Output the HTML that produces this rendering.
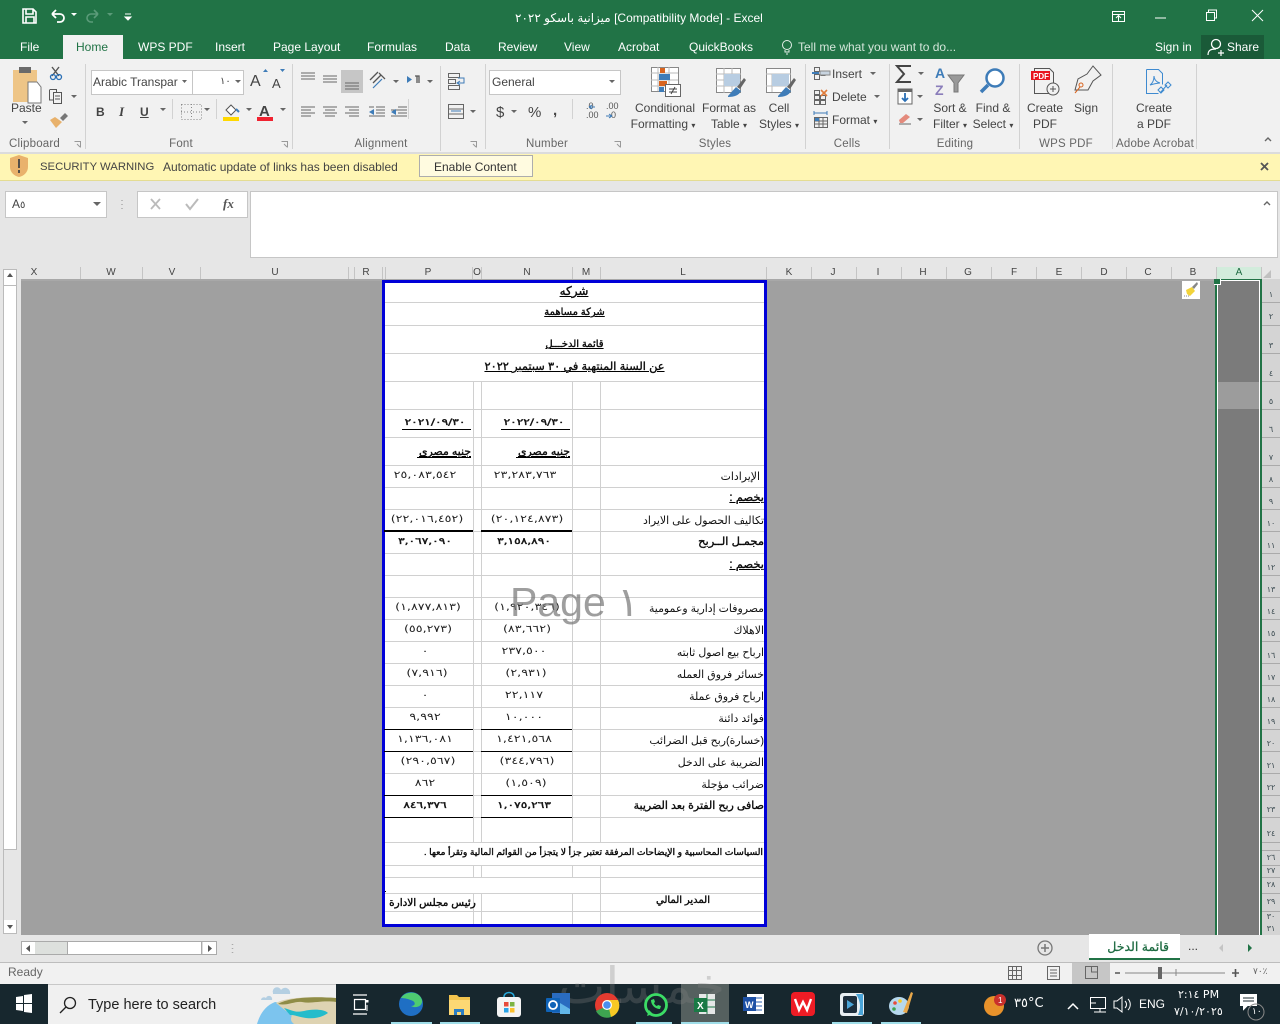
<!DOCTYPE html>
<html lang="en"><head><meta charset="utf-8"><title>Excel</title>
<style>
html,body{margin:0;padding:0;width:1280px;height:1024px;overflow:hidden;background:#e6e6e6;font-family:"Liberation Sans","DejaVu Sans",sans-serif}
.b{position:absolute}
.t{position:absolute;white-space:nowrap;line-height:16px;font-size:12px;color:#444}
.c{transform:translateX(-50%)}
.tab{color:#fff;top:39px}
.g{color:#666;top:136px;font-size:11.5px;letter-spacing:.2px}
.h{position:absolute;top:267px;height:12px;line-height:12px;font-size:10px;color:#444;transform:translateX(-50%)}
.s{position:absolute;top:267px;width:1px;height:12px;background:#c4c4c4}
.r{position:absolute;left:1262px;width:18px;text-align:center;font:8px "DejaVu Sans",sans-serif;color:#3a4a50;height:10px;line-height:10px}
.rl{position:absolute;left:1262px;width:18px;height:1px;background:#aaa}
.hl{position:absolute;left:385px;width:379px;height:1px;background:#d0d0d0}
.vl{position:absolute;width:1px;background:#d0d0d0}
.k{position:absolute;background:#000;height:1px}
.a{position:absolute;white-space:nowrap;font:10.9px/14px "Liberation Sans","DejaVu Sans",sans-serif;color:#111;direction:rtl}
.ab{-webkit-text-stroke:.35px #000}
.u{text-decoration:underline}
.n{position:absolute;white-space:nowrap;font:10px/14px "DejaVu Sans",sans-serif;color:#222;text-align:center;transform:translateX(-50%) scaleX(1.27)}
.nb{font-size:9px;-webkit-text-stroke:.35px #000;transform:translateX(-50%) scaleX(1.36)}
.cr{font-size:8px}
</style></head><body>

<div class="b" style="left:0;top:0;width:1280px;height:59px;background:#217346"></div>
<div class="b" style="left:63px;top:35px;width:60px;height:24px;background:#f1f1f1"></div>
<div class="b" style="left:1201px;top:35px;width:63px;height:24px;background:#1a5a38"></div>
<div class="b" style="left:0;top:59px;width:1280px;height:93px;background:#f1f1f1"></div>
<div class="b" style="left:0;top:152px;width:1280px;height:2px;background:#dcdcdc"></div>
<div class="b" style="left:0;top:154px;width:1280px;height:26px;background:#fff6b4;border-bottom:1px solid #e4dc92"></div>
<div class="b" style="left:419px;top:155px;width:112px;height:20px;background:#fffbe0;border:1px solid #adadad"></div>
<div class="b" style="left:0;top:181px;width:1280px;height:86px;background:#e6e6e6"></div>
<div class="b" style="left:5px;top:191px;width:100px;height:25px;background:#fff;border:1px solid #c6c6c6"></div>
<div class="b" style="left:137px;top:191px;width:109px;height:25px;background:#fff;border:1px solid #c6c6c6"></div>
<div class="b" style="left:250px;top:191px;width:1026px;height:65px;background:#fff;border:1px solid #c6c6c6"></div>
<div class="b" style="left:0;top:267px;width:1280px;height:12px;background:#e6e6e6;border-bottom:2px solid #a8a8a8"></div>
<div class="b" style="left:1216px;top:267px;width:45px;height:12px;background:#d2ecdc"></div>

<div class="b" style="left:0;top:281px;width:1280px;height:654px;background:#a0a0a0"></div>
<div class="b" style="left:0;top:268px;width:21px;height:667px;background:#e6e6e6"></div>
<div class="b" style="left:3px;top:269px;width:14px;height:665px;background:#fff;border:1px solid #bbb;box-sizing:border-box"></div>
<div class="b" style="left:3px;top:285px;width:14px;height:565px;background:#fff;border:1px solid #bbb;box-sizing:border-box"></div>
<div class="b" style="left:3px;top:850px;width:14px;height:70px;background:#e6e6e6;border-left:1px solid #bbb;box-sizing:border-box"></div>

<div class="b" style="left:1215px;top:279px;width:47px;height:656px;background:#217346"></div>
<div class="b" style="left:1217px;top:280px;width:43px;height:655px;background:#fff"></div>
<div class="b" style="left:1218px;top:281px;width:41px;height:654px;background:#7b7b7b"></div>
<div class="b" style="left:1218px;top:382px;width:41px;height:27px;background:#9c9c9c"></div>
<div class="b" style="left:1262px;top:279px;width:18px;height:656px;background:#d4d4d4"></div>
<div class="b" style="left:1214px;top:279px;width:6px;height:5px;background:#217346;border-right:1px solid #fff;border-bottom:1px solid #fff"></div>

<div class="b" style="left:382px;top:280px;width:379px;height:641px;background:#fff;border:3px solid #0000d8"></div>

<div class="hl" style="top:302px"></div><div class="hl" style="top:325px"></div><div class="hl" style="top:353px"></div><div class="hl" style="top:381px"></div><div class="hl" style="top:409px"></div><div class="hl" style="top:437px"></div><div class="hl" style="top:465px"></div><div class="hl" style="top:487px"></div><div class="hl" style="top:509px"></div><div class="hl" style="top:531px"></div><div class="hl" style="top:553px"></div><div class="hl" style="top:575px"></div><div class="hl" style="top:597px"></div><div class="hl" style="top:619px"></div><div class="hl" style="top:641px"></div><div class="hl" style="top:663px"></div><div class="hl" style="top:685px"></div><div class="hl" style="top:707px"></div><div class="hl" style="top:729px"></div><div class="hl" style="top:751px"></div><div class="hl" style="top:773px"></div><div class="hl" style="top:795px"></div><div class="hl" style="top:817px"></div><div class="hl" style="top:842px"></div><div class="hl" style="top:865px"></div><div class="hl" style="top:877px"></div><div class="hl" style="top:893px"></div><div class="hl" style="top:911px"></div>
<div class="vl" style="left:473px;top:381px;height:461px"></div><div class="vl" style="left:481px;top:381px;height:461px"></div><div class="vl" style="left:572px;top:381px;height:461px"></div><div class="vl" style="left:600px;top:381px;height:461px"></div>
<div class="vl" style="left:473px;top:865px;height:12px"></div><div class="vl" style="left:481px;top:865px;height:12px"></div><div class="vl" style="left:572px;top:865px;height:12px"></div><div class="vl" style="left:600px;top:865px;height:59px"></div>
<div class="vl" style="left:473px;top:893px;height:31px"></div><div class="vl" style="left:481px;top:893px;height:31px"></div><div class="vl" style="left:572px;top:893px;height:31px"></div>
<div class="b" style="left:385px;top:891px;width:1px;height:1px;background:#000"></div>

<div class="k" style="left:402px;top:429px;width:69px"></div><div class="k" style="left:501px;top:429px;width:69px"></div>
<div class="k" style="left:417px;top:457px;width:54px"></div><div class="k" style="left:516px;top:457px;width:54px"></div>
<div class="k" style="left:384px;top:530px;width:89px;height:2px"></div><div class="k" style="left:481px;top:530px;width:91px;height:2px"></div>
<div class="k" style="left:384px;top:729px;width:89px"></div><div class="k" style="left:481px;top:729px;width:91px"></div>
<div class="k" style="left:384px;top:751px;width:89px"></div><div class="k" style="left:481px;top:751px;width:91px"></div>
<div class="k" style="left:384px;top:795px;width:89px"></div><div class="k" style="left:481px;top:795px;width:91px"></div>
<div class="k" style="left:384px;top:817px;width:89px"></div><div class="k" style="left:481px;top:817px;width:91px"></div>

<div class="a ab u" style="left:544px;top:284px;font-size:12px;width:60px;text-align:center">شركه</div>
<div class="a ab u" style="left:524px;top:306px;width:101px;text-align:center;font-size:10px">شركة مساهمة</div>
<div class="a ab u" style="left:524px;top:338px;width:101px;text-align:center;font-size:10px">قائمة الدخـــل</div>
<div class="a ab u" style="left:464px;top:360px;width:221px;text-align:center;font-size:11.400px">عن السنة المنتهية في ٣٠ سبتمبر ٢٠٢٢</div>

<div class="n nb" style="left:435px;top:416px">٢٠٢١/٠٩/٣٠</div>
<div class="n nb" style="left:534px;top:416px">٢٠٢٢/٠٩/٣٠</div>
<div class="a ab u" style="left:411px;top:445px;width:60px">جنيه مصري</div>
<div class="a ab u" style="left:510px;top:445px;width:60px">جنيه مصري</div>

<div class="a" style="left:680px;top:470px;width:80px">الإيرادات</div>
<div class="a ab u" style="left:680px;top:491px;width:84px;font-size:11.500px">يخصم :</div>
<div class="a" style="left:600px;top:514px;width:164px">تكاليف الحصول على الايراد</div>
<div class="a ab" style="left:640px;top:535px;width:124px;font-size:11.500px">مجمـل الــربح</div>
<div class="a ab u" style="left:680px;top:558px;width:84px;font-size:11.500px">يخصم :</div>
<div class="a" style="left:600px;top:602px;width:164px">مصروفات إدارية وعمومية</div>
<div class="a" style="left:680px;top:624px;width:84px">الاهلاك</div>
<div class="a" style="left:600px;top:646px;width:164px">ارباح بيع اصول ثابته</div>
<div class="a" style="left:600px;top:668px;width:164px">خسائر فروق العمله</div>
<div class="a" style="left:600px;top:690px;width:164px">ارباح  فروق عملة</div>
<div class="a" style="left:680px;top:712px;width:84px">فوائد دائنة</div>
<div class="a" style="left:600px;top:734px;width:164px">(خسارة)ربح قبل الضرائب</div>
<div class="a" style="left:600px;top:756px;width:164px">الضريبة على الدخل</div>
<div class="a" style="left:680px;top:778px;width:84px">ضرائب مؤجلة</div>
<div class="a ab" style="left:600px;top:799px;width:164px;font-size:11px">صافى ربح الفترة بعد الضريبة</div>
<div class="a ab" style="left:385px;top:845px;width:378px;font-size:9.200px">السياسات المحاسبية و الإيضاحات المرفقة  تعتبر جزأ لا يتجزأ من القوائم المالية وتقرأ معها .</div>
<div class="a ab" style="left:625px;top:894px;width:116px;text-align:center;font-size:10px">المدير  المالي</div>
<div class="a ab" style="left:387px;top:896px;width:91px;text-align:center;font-size:10.500px">رئيس مجلس الادارة</div>

<div class="n" style="left:425px;top:469px">٢٥,٠٨٣,٥٤٢</div><div class="n" style="left:525px;top:469px">٢٣,٢٨٣,٧٦٣</div>
<div class="n" style="left:427px;top:513px">(٢٢,٠١٦,٤٥٢)</div><div class="n" style="left:527px;top:513px">(٢٠,١٢٤,٨٧٣)</div>
<div class="n nb" style="left:425px;top:535px">٣,٠٦٧,٠٩٠</div><div class="n nb" style="left:524px;top:535px">٣,١٥٨,٨٩٠</div>
<div class="n" style="left:428px;top:601px">(١,٨٧٧,٨١٣)</div><div class="n" style="left:527px;top:601px">(١,٩٢٠,٣٤٦)</div>
<div class="n" style="left:428px;top:623px">(٥٥,٢٧٣)</div><div class="n" style="left:527px;top:623px">(٨٣,٦٦٢)</div>
<div class="n" style="left:425px;top:645px">٠</div><div class="n" style="left:524px;top:645px">٢٣٧,٥٠٠</div>
<div class="n" style="left:427px;top:667px">(٧,٩١٦)</div><div class="n" style="left:526px;top:667px">(٢,٩٣١)</div>
<div class="n" style="left:425px;top:689px">٠</div><div class="n" style="left:524px;top:689px">٢٢,١١٧</div>
<div class="n" style="left:425px;top:711px">٩,٩٩٢</div><div class="n" style="left:524px;top:711px">١٠,٠٠٠</div>
<div class="n" style="left:425px;top:733px">١,١٣٦,٠٨١</div><div class="n" style="left:524px;top:733px">١,٤٢١,٥٦٨</div>
<div class="n" style="left:428px;top:755px">(٢٩٠,٥٦٧)</div><div class="n" style="left:527px;top:755px">(٣٤٤,٧٩٦)</div>
<div class="n" style="left:425px;top:777px">٨٦٢</div><div class="n" style="left:526px;top:777px">(١,٥٠٩)</div>
<div class="n nb" style="left:425px;top:799px">٨٤٦,٣٧٦</div><div class="n nb" style="left:524px;top:799px">١,٠٧٥,٢٦٣</div>

<div class="b" style="left:510px;top:577px;font:41px/50px 'Liberation Sans','DejaVu Sans',sans-serif;color:rgba(120,120,120,.72);white-space:nowrap">Page ١</div>

<!-- column headers -->
<div class="s" style="left:80px"></div><div class="s" style="left:142px"></div><div class="s" style="left:200px"></div><div class="s" style="left:348px"></div><div class="s" style="left:354px"></div><div class="s" style="left:382px"></div><div class="s" style="left:385px"></div><div class="s" style="left:472px"></div><div class="s" style="left:481px"></div><div class="s" style="left:572px"></div><div class="s" style="left:600px"></div><div class="s" style="left:766px"></div><div class="s" style="left:811px"></div><div class="s" style="left:856px"></div><div class="s" style="left:901px"></div><div class="s" style="left:946px"></div><div class="s" style="left:991px"></div><div class="s" style="left:1036px"></div><div class="s" style="left:1081px"></div><div class="s" style="left:1126px"></div><div class="s" style="left:1171px"></div><div class="s" style="left:1216px"></div><div class="s" style="left:1261px"></div>
<div class="h" style="left:34px">X</div><div class="h" style="left:111px">W</div><div class="h" style="left:172px">V</div><div class="h" style="left:275px">U</div><div class="h" style="left:366px">R</div><div class="h" style="left:428px">P</div><div class="h" style="left:477px">O</div><div class="h" style="left:527px">N</div><div class="h" style="left:586px">M</div><div class="h" style="left:683px">L</div><div class="h" style="left:789px">K</div><div class="h" style="left:833px">J</div><div class="h" style="left:878px">I</div><div class="h" style="left:923px">H</div><div class="h" style="left:968px">G</div><div class="h" style="left:1014px">F</div><div class="h" style="left:1059px">E</div><div class="h" style="left:1104px">D</div><div class="h" style="left:1148px">C</div><div class="h" style="left:1193px">B</div><div class="h" style="left:1239px;color:#1c6a40">A</div>

<!-- row headers -->
<div class="rl" style="top:302px"></div><div class="rl" style="top:325px"></div><div class="rl" style="top:353px"></div><div class="rl" style="top:381px"></div><div class="rl" style="top:409px"></div><div class="rl" style="top:437px"></div><div class="rl" style="top:465px"></div><div class="rl" style="top:487px"></div><div class="rl" style="top:509px"></div><div class="rl" style="top:531px"></div><div class="rl" style="top:553px"></div><div class="rl" style="top:575px"></div><div class="rl" style="top:597px"></div><div class="rl" style="top:619px"></div><div class="rl" style="top:641px"></div><div class="rl" style="top:663px"></div><div class="rl" style="top:685px"></div><div class="rl" style="top:707px"></div><div class="rl" style="top:729px"></div><div class="rl" style="top:751px"></div><div class="rl" style="top:773px"></div><div class="rl" style="top:795px"></div><div class="rl" style="top:817px"></div><div class="rl" style="top:842px"></div><div class="rl" style="top:850px"></div><div class="rl" style="top:865px"></div><div class="rl" style="top:877px"></div><div class="rl" style="top:893px"></div><div class="rl" style="top:911px"></div>
<div class="r" style="top:290px">١</div><div class="r" style="top:312px">٢</div><div class="r" style="top:341px">٣</div><div class="r" style="top:369px">٤</div><div class="r" style="top:397px">٥</div><div class="r" style="top:425px">٦</div><div class="r" style="top:453px">٧</div><div class="r" style="top:475px">٨</div><div class="r" style="top:497px">٩</div><div class="r" style="top:519px">١٠</div><div class="r" style="top:541px">١١</div><div class="r" style="top:563px">١٢</div><div class="r" style="top:585px">١٣</div><div class="r" style="top:607px">١٤</div><div class="r" style="top:629px">١٥</div><div class="r" style="top:651px">١٦</div><div class="r" style="top:673px">١٧</div><div class="r" style="top:695px">١٨</div><div class="r" style="top:717px">١٩</div><div class="r" style="top:739px">٢٠</div><div class="r" style="top:761px">٢١</div><div class="r" style="top:783px">٢٢</div><div class="r" style="top:805px">٢٣</div><div class="r" style="top:829px">٢٤</div><div class="r" style="top:853px">٢٦</div><div class="r" style="top:866px">٢٧</div><div class="r" style="top:880px">٢٨</div><div class="r" style="top:897px">٢٩</div><div class="r" style="top:912px">٣٠</div><div class="r" style="top:924px">٣١</div>

<!-- bottom bars -->
<div class="b" style="left:0;top:935px;width:1280px;height:27px;background:#e6e6e6;border-bottom:1px solid #bdbdbd"></div>
<div class="b" style="left:0;top:963px;width:1280px;height:21px;background:#f1f1f1"></div>
<div class="b" style="left:21px;top:941px;width:196px;height:14px;background:#dcdcdc;border:1px solid #aaa;box-sizing:border-box"></div>
<div class="b" style="left:67px;top:941px;width:135px;height:14px;background:#fff;border:1px solid #aaa;box-sizing:border-box"></div>
<div class="b" style="left:35px;top:942px;width:32px;height:12px;background:#dde0dd"></div>
<div class="b" style="left:22px;top:942px;width:13px;height:12px;background:#fff"></div>
<div class="b" style="left:203px;top:942px;width:13px;height:12px;background:#fff"></div>
<div class="b" style="left:1089px;top:934px;width:91px;height:24px;background:#fff;border-bottom:2px solid #217346"></div>
<div class="b" style="left:1072px;top:963px;width:38px;height:21px;background:#c6c6c6"></div>
<div class="b" style="left:0;top:984px;width:1280px;height:40px;background:#17272e"></div>
<div class="b" style="left:48px;top:984px;width:288px;height:40px;background:#f0f0f0;border-top:1px solid #c8c8c8;box-sizing:border-box"></div>
<div class="b" style="left:681px;top:984px;width:48px;height:40px;background:#55605f"></div>
<div class="b" style="left:555px;top:952px;font:50px/60px 'Noto Sans CJK SC','DejaVu Sans',sans-serif;color:rgba(130,130,130,.3);white-space:nowrap;direction:rtl;width:170px">خمسات</div>
<div class="b" style="left:391px;top:1022px;width:41px;height:2px;background:#9fdde8"></div>
<div class="b" style="left:440px;top:1022px;width:40px;height:2px;background:#9fdde8"></div>
<div class="b" style="left:636px;top:1022px;width:36px;height:2px;background:#9fdde8"></div>
<div class="b" style="left:681px;top:1022px;width:48px;height:2px;background:#9fdde8"></div>
<div class="b" style="left:832px;top:1022px;width:40px;height:2px;background:#9fdde8"></div>
<div class="b" style="left:881px;top:1022px;width:40px;height:2px;background:#9fdde8"></div>

<!-- title bar & tabs -->
<div class="t" style="left:515px;top:10px;color:#fff;direction:ltr;width:260px"><span dir="rtl">ميزانية باسكو ٢٠٢٢</span> [Compatibility Mode] - Excel</div>
<div class="t tab" style="left:20px">File</div>
<div class="t tab" style="left:76px;color:#217346">Home</div>
<div class="t tab" style="left:138px">WPS PDF</div>
<div class="t tab" style="left:215px">Insert</div>
<div class="t tab" style="left:273px">Page Layout</div>
<div class="t tab" style="left:367px">Formulas</div>
<div class="t tab" style="left:445px">Data</div>
<div class="t tab" style="left:498px">Review</div>
<div class="t tab" style="left:564px">View</div>
<div class="t tab" style="left:618px">Acrobat</div>
<div class="t tab" style="left:689px">QuickBooks</div>
<div class="t tab" style="left:798px;color:#d4e6da">Tell me what you want to do...</div>
<div class="t tab" style="left:1155px">Sign in</div>
<div class="t tab" style="left:1227px">Share</div>

<!-- ribbon text -->
<div class="t" style="left:11px;top:100px">Paste</div>
<div class="b" style="left:91px;top:70px;width:100px;height:23px;background:#fff;border:1px solid #c6c6c6"></div>
<div class="b" style="left:192px;top:70px;width:50px;height:23px;background:#fff;border:1px solid #c6c6c6"></div>
<div class="b" style="left:489px;top:70px;width:130px;height:23px;background:#fff;border:1px solid #c6c6c6"></div>
<div class="t" style="left:93px;top:74px;width:85px;overflow:hidden">Arabic Transparent</div>
<div class="t" style="left:220px;top:74px;font-family:'DejaVu Sans';font-size:10px">١٠</div>
<div class="t" style="left:492px;top:74px">General</div>
<div class="t" style="left:96px;top:104px;font-weight:bold">B</div>
<div class="t" style="left:119px;top:104px;font-style:italic;font-family:'Liberation Serif';font-size:13px;font-weight:bold">I</div>
<div class="t" style="left:140px;top:104px;font-weight:bold;text-decoration:underline">U</div>
<div class="t" style="left:250px;top:74px;font-size:16px">A</div>
<div class="t" style="left:272px;top:76px;font-size:13px">A</div>
<div class="t" style="left:259px;top:104px;font-size:15px;font-weight:bold;color:#444">A</div>
<div class="t" style="left:496px;top:105px;font-size:15px">$</div>
<div class="t" style="left:528px;top:105px;font-size:15px">%</div>
<div class="t" style="left:553px;top:103px;font-size:15px;font-weight:bold">,</div>
<div class="t" style="left:586px;top:102px;font-size:9px;line-height:9px;color:#555">.0<br>.00</div>
<div class="t" style="left:606px;top:102px;font-size:9px;line-height:9px;color:#555">.00<br>&nbsp;.0</div>

<div class="t c" style="left:665px;top:100px">Conditional</div>
<div class="t c" style="left:663px;top:116px">Formatting <span class="cr">▾</span></div>
<div class="t c" style="left:729px;top:100px">Format as</div>
<div class="t c" style="left:729px;top:116px">Table <span class="cr">▾</span></div>
<div class="t c" style="left:779px;top:100px">Cell</div>
<div class="t c" style="left:779px;top:116px">Styles <span class="cr">▾</span></div>
<div class="t" style="left:832px;top:66px">Insert</div>
<div class="t" style="left:832px;top:89px">Delete</div>
<div class="t" style="left:832px;top:112px">Format <span class="cr">▾</span></div>
<div class="t c" style="left:950px;top:100px">Sort &amp;</div>
<div class="t c" style="left:950px;top:116px">Filter <span class="cr">▾</span></div>
<div class="t c" style="left:993px;top:100px">Find &amp;</div>
<div class="t c" style="left:993px;top:116px">Select <span class="cr">▾</span></div>
<div class="t c" style="left:1045px;top:100px">Create</div>
<div class="t c" style="left:1045px;top:116px">PDF</div>
<div class="t c" style="left:1086px;top:100px">Sign</div>
<div class="t c" style="left:1154px;top:100px">Create</div>
<div class="t c" style="left:1154px;top:116px">a PDF</div>

<div class="t g" style="left:9px">Clipboard</div>
<div class="t g c" style="left:181px">Font</div>
<div class="t g c" style="left:381px">Alignment</div>
<div class="t g c" style="left:547px">Number</div>
<div class="t g c" style="left:715px">Styles</div>
<div class="t g c" style="left:847px">Cells</div>
<div class="t g c" style="left:955px">Editing</div>
<div class="t g c" style="left:1066px">WPS PDF</div>
<div class="t g c" style="left:1155px">Adobe Acrobat</div>

<div class="t" style="left:40px;top:159px;color:#444;font-size:11.300px">SECURITY WARNING</div>
<div class="t" style="left:163px;top:159px;color:#444">Automatic update of links has been disabled</div>
<div class="t" style="left:434px;top:159px;color:#333">Enable Content</div>
<div class="t" style="left:12px;top:196px;color:#444">A<span style="font:10px 'DejaVu Sans'">٥</span></div>
<div class="t" style="left:223px;top:196px;font:italic bold 13px/16px 'Liberation Serif';color:#555">fx</div>

<div class="t" style="left:8px;top:964px;color:#666">Ready</div>
<div class="t" style="left:88px;top:997px;font-size:14.500px;color:#222">Type here to search</div>
<div class="t" style="left:1105px;top:939px;width:64px;font:12.500px/16px 'Liberation Sans','DejaVu Sans',sans-serif;color:#1c6a40;-webkit-text-stroke:.25px #1c6a40;direction:rtl">قائمة الدخل</div>
<div class="t" style="left:1188px;top:938px;color:#333">...</div>
<div class="t" style="left:1253px;top:964px;font:9px/16px 'DejaVu Sans';color:#666">٧٠٪</div>
<div class="t" style="left:1014px;top:996px;font:13px/16px 'DejaVu Sans','Liberation Sans',sans-serif;color:#fff">٣٥°C</div>
<div class="t" style="left:1139px;top:996px;color:#fff;font-size:12px">ENG</div>
<div class="t" style="left:1178px;top:987px;color:#fff;font:11px/16px 'DejaVu Sans',sans-serif">٢:١٤ PM</div>
<div class="t" style="left:1174px;top:1004px;color:#fff;font:11px/16px 'DejaVu Sans',sans-serif">٧/١٠/٢٠٢٥</div>
<div class="t" style="left:1252px;top:1004px;color:#fff;font:9px/16px 'DejaVu Sans',sans-serif">١٠</div>

<!-- icons overlay -->
<svg class="b" style="left:0;top:0;pointer-events:none" width="1280" height="1024" viewBox="0 0 1280 1024" fill="none">
<!-- qat -->
<path d="M23 9h10l3 3v11H23zM26 9v5h7V9M26 23v-6h8v6" stroke="#fff" stroke-width="1.6"/>
<path d="M52 14l4-4M52 14l4 4M52 14h8a4 4 0 0 1 0 8h-3" stroke="#fff" stroke-width="1.8"/>
<path d="M71 13l3 3 3-3z" fill="#fff"/>
<path d="M98 14l-4-4M98 14l-4 4M98 14h-7a4 4 0 0 0 0 8h2" stroke="#5b9b79" stroke-width="1.6"/>
<path d="M107 13l3 3 3-3z" fill="#5b9b79"/>
<path d="M125 14h6M125 17l3 3 3-3z" stroke="#fff" fill="#fff"/>
<!-- window -->
<path d="M1112.500 11.500h12v10h-12zM1112.500 14.500h12M1118.500 21v-5M1116 18l2.500-2.500 2.500 2.500" stroke="#fff"/>
<path d="M1155 18h11" stroke="#fff"/>
<path d="M1206.500 12.500h8v8h-8zM1208.500 12v-2h8v8h-2" stroke="#fff"/>
<path d="M1252 10l11 11M1263 10l-11 11" stroke="#fff"/>
<circle cx="787" cy="45" r="4.500" stroke="#e4efe8"/><path d="M785 50v2h4v-2M786 54h2" stroke="#e4efe8"/>
<circle cx="1216" cy="44" r="4.500" stroke="#fff" stroke-width="1.300"/><path d="M1208 55c0-5 3-6 8-6M1218 53h6M1221 50v6" stroke="#fff" stroke-width="1.200"/>
<!-- clipboard -->
<path d="M13 70h24v32H13z" fill="#eec587"/><rect x="19" y="67" width="12" height="6" fill="#6a6a6a"/>
<path d="M28 82h9l4 5v16H28z" fill="#fff" stroke="#777"/>
<path d="M52 67l7 9M59 67l-7 9" stroke="#555" stroke-width="1.400"/><circle cx="53" cy="77" r="2.500" stroke="#2a6fb5" stroke-width="1.300"/><circle cx="59" cy="77" r="2.500" stroke="#2a6fb5" stroke-width="1.300"/>
<path d="M49.500 89.500h7l0 3M53.500 92.500h8v11h-8zM55 96h5M55 99h5M53 100h-3.500v-10" stroke="#555"/>
<path d="M71 95l3 3 3-3zM22 121l3 3 3-3z" fill="#666"/>
<path d="M50 120l6 8 6-6-7-5z" fill="#e8b16b"/><path d="M60 118l5-5 3 3-5 5z" fill="#777"/>
<!-- separators -->
<path d="M85.500 64v85M292.500 64v85M485.500 64v85M805.500 64v85M889.500 64v85M1019.500 64v85M1112.500 64v85M1196.500 64v85" stroke="#d2d2d2"/>
<path d="M182 80l2.500 3 2.500-3zM235 80l3 3 3-3zM609 80l3 3 3-3zM160 108l3 3 3-3zM204 108l3 3 3-3zM246 108l3 3 3-3zM280 108l3 3 3-3z" fill="#666"/>
<path d="M263 72l2.500-3 2.500 3zM280 69l2.500 3 2.500-3z" fill="#3e7cb8"/>
<path d="M172.500 99v20M216.500 99v20M408.500 99v20M572.500 99v20M440.500 66v85" stroke="#d2d2d2"/>
<path d="M181.500 104.500h20v15h-20z" stroke="#888" stroke-dasharray="1 2"/><path d="M191.500 104v15M181 112h20" stroke="#888" stroke-dasharray="1 2"/>
<path d="M223 117h16v4h-16z" fill="#ffd800"/><path d="M257 117h16v4h-16z" fill="#f02230"/>
<path d="M226 110l5-5 5 5-5 5z" stroke="#555" fill="#fff"/><path d="M236 109l3 3" stroke="#3e7cb8" stroke-width="2"/>
<!-- alignment -->
<rect x="341" y="70" width="22" height="23" fill="#c6c6c6"/>
<path d="M301 73h14M301 76h14M301 79h14M323 76h14M323 79h14M323 82h14M345 83h14M345 86h14M345 89h14" stroke="#666"/>
<path d="M370 80l8-8M373 83l8-8M379 73l6 6" stroke="#555" stroke-width="1.300"/><path d="M373 88l9-9" stroke="#3e7cb8" stroke-width="1.200"/>
<path d="M393 80l3 3 3-3zM427 80l3 3 3-3z" fill="#666"/><path d="M407 76l5 3.500-5 3.500z" fill="#3e7cb8"/>
<path d="M415 76h4v7M417 76v7" stroke="#555" stroke-width="1.300"/>
<path d="M301 107h14M301 110h10M301 113h14M301 116h10M323 107h14M325 110h10M323 113h14M325 116h10M345 107h14M349 110h10M345 113h14M349 116h10M376 107h9M376 110h9M376 113h9M369 116h16M369 107h5M391 110h16M398 107h9M398 113h9M391 116h16" stroke="#666"/>
<path d="M369 112l5-3v6z" fill="#3e7cb8"/><path d="M391 112l5-3v6z" fill="#3e7cb8"/>
<path d="M448.500 73.500h11v4h-11zM448.500 79.500h7v4h-7zM448.500 85.500h11v4h-11z" stroke="#666"/><path d="M458 78h6v5h-6M460 81l-3 2 3 2" stroke="#3e7cb8"/>
<path d="M448.500 104.500h15v14h-15zM448.500 109h15M448.500 114h15" stroke="#666"/><path d="M451 111h10" stroke="#3e7cb8"/>
<path d="M470 110l3 3 3-3z" fill="#666"/>
<path d="M511 110l3 3 3-3z" fill="#666"/>
<path d="M595 107h-6M589 107l3-2M589 107l3 2M606 116h6M612 116l-3-2M612 116l-3 2" stroke="#3e7cb8"/>
<path d="M74.500 141.500h6v6M77 144l3 3M281.500 141.500h6v6M284 144l3 3M470.500 141.500h6v6M473 144l3 3M614.500 141.500h6v6M617 144l3 3" stroke="#999"/>
<!-- conditional -->
<path d="M651.500 67.500h27v24h-27z" fill="#fff" stroke="#888"/><path d="M651 73h27M651 80h27M651 86h27M658 67v24M669 67v24" stroke="#bbb"/>
<rect x="660" y="68" width="5" height="5" fill="#d8641f"/><rect x="659" y="74" width="11" height="6" fill="#3e7cb8"/><rect x="659" y="81" width="8" height="5" fill="#d8641f"/><rect x="659" y="87" width="5" height="5" fill="#3e7cb8"/>
<rect x="665.500" y="84.500" width="15" height="12" fill="#fff" stroke="#666"/><path d="M669 89h8M669 92h8M675 87l-4 7" stroke="#444"/>
<!-- format table -->
<path d="M716.500 68.500h24v24h-24z" fill="#fff" stroke="#888"/><path d="M716 74h25M716 80h25M716 86h25M724 68v25M732 68v25" stroke="#bbb"/>
<rect x="724" y="74" width="16" height="12" fill="#b8cde2"/>
<path d="M728 96l8-9 5 4c-2 4-6 6-13 6z" fill="#3e7cb8"/><path d="M737 87l7-9 2 2-6 9z" fill="#666"/>
<path d="M766.500 68.500h24v24h-24z" fill="#fff" stroke="#888"/><path d="M766 74h25M766 86h25M772 74v18" stroke="#bbb"/><rect x="772" y="74" width="17" height="12" fill="#b8cde2"/>
<path d="M778 96l8-9 5 4c-2 4-6 6-13 6z" fill="#3e7cb8"/><path d="M787 87l7-9 2 2-6 9z" fill="#666"/>
<!-- cells -->
<path d="M814.500 67.500h5v4h-5zM814.500 74.500h5v5h-5zM820.500 75.500h5" stroke="#666"/><rect x="820" y="71" width="10" height="4" fill="#c8d4e0" stroke="#888"/><path d="M812 73h7" stroke="#3e7cb8" stroke-width="2"/>
<path d="M814.500 90.500h5v4h-5zM820.500 95.500h5v4h-5zM814.500 95.500h5v4h-5zM814.500 100.500h5v4h-5zM820.500 100.500h5v4h-5z" stroke="#666"/><path d="M821 90l6 6M827 90l-6 6" stroke="#e07b39" stroke-width="1.600"/>
<path d="M814.500 117.500h13v10h-13zM814.500 121h13M814.500 124h13M819 117v10M823 117v10" stroke="#666"/><path d="M814 113h13M814 111v4M827 111v4" stroke="#3e7cb8"/><rect x="815" y="118" width="4" height="3" fill="#3e7cb8"/>
<path d="M870 72l3 3 3-3zM874 95l3 3 3-3z" fill="#666"/>
<!-- editing -->
<path d="M911 66h-14l7 8-7 8h14" stroke="#444" stroke-width="2"/><path d="M918 72l3 3 3-3zM917 95l3 3 3-3zM917 118l3 3 3-3z" fill="#666"/>
<rect x="898" y="89" width="14" height="15" fill="#fff" stroke="#666"/><rect x="898" y="89" width="14" height="3" fill="#666"/><path d="M905 93v8M902 98l3 3 3-3" stroke="#2a6fb5" stroke-width="1.800"/>
<path d="M899 120l7-6 4 3-7 6h-3z" fill="#e48a7c"/><path d="M899 124h12" stroke="#666"/>
<text x="935" y="78" font-family="Liberation Sans" font-size="14" font-weight="bold" fill="#3e7cb8">A</text><text x="935" y="95" font-family="Liberation Sans" font-size="14" font-weight="bold" fill="#8a7dba">Z</text>
<path d="M948 75h16l-6 8v9h-4v-9z" fill="#999" stroke="#777"/>
<circle cx="995" cy="78" r="8.500" fill="#fff" stroke="#3e7cb8" stroke-width="2.500"/><path d="M988 85l-7 7" stroke="#3e7cb8" stroke-width="3.500"/>
<!-- pdf -->
<path d="M1034.500 68.500h15l4 4v21h-19z" stroke="#555"/><rect x="1031" y="71" width="19" height="9" fill="#e8151f"/>
<text x="1033" y="79" font-family="Liberation Sans" font-size="8" font-weight="bold" fill="#fff">PDF</text>
<circle cx="1053" cy="89" r="6" fill="#f1f1f1" stroke="#555"/><path d="M1050 89h6M1053 86v6" stroke="#555"/>
<path d="M1075 90l3-11 9-5 6-8 8 9-8 6-5 9z" stroke="#555"/><circle cx="1081" cy="85" r="2" stroke="#d8641f"/><path d="M1075 93l5-6" stroke="#d8641f"/>
<path d="M1146.500 69.500h12l4 4v11M1146.500 69.500v24h12" stroke="#3e8ad0"/><path d="M1150 85c3-2 4-6 4-9 0 3 2 6 6 7-3 0-6 1-10 2z" stroke="#3e8ad0"/>
<path d="M1160 93l7-8M1158 90l3-3 3 3-3 3zM1165 85l3-3 3 3-3 3z" stroke="#3e8ad0"/>
<path d="M1265 141l3-3 3 3" stroke="#666" stroke-width="1.400"/>
<path d="M1264 205l3-3 3 3" stroke="#666" stroke-width="1.400"/>
<!-- warning -->
<path d="M10 158l9-3 9 3v9c0 5-4 9-9 10-5-1-9-5-9-10z" fill="#e9b26c"/><path d="M19 159v9M19 170v3" stroke="#444" stroke-width="1.800"/>
<path d="M1261 163l7 7M1268 163l-7 7" stroke="#555" stroke-width="1.800"/>
<!-- formula -->
<path d="M93 202h8l-4 4z" fill="#666"/>
<path d="M122 200v1M122 204v1M122 208v1" stroke="#aaa" stroke-width="1.500"/>
<path d="M151 199l9 10M160 199l-9 10" stroke="#bbb" stroke-width="1.800"/>
<path d="M186 204l4 5 8-10" stroke="#bbb" stroke-width="2"/>
<!-- scrollbars -->
<path d="M7 277l3-4 3 4zM7 925l3 4 3-4z" fill="#555"/>
<path d="M30 945v7l-4-3.500zM208 945v7l4-3.500z" fill="#555"/>
<path d="M1263 278h8v-8z" fill="#c0c0c0"/>
<path d="M232.500 944v1M232.500 948v1M232.500 952v1" stroke="#aaa" stroke-width="1.500"/>
<rect x="1182" y="281" width="18" height="18" fill="#fff"/><path d="M1186 290l6-3 3 4-5 5-3-2z" fill="#f2d33a"/><path d="M1192 287l5-5 1 2-4 5z" fill="#888"/><path d="M1184 296h5" stroke="#888" stroke-dasharray="1 1"/>
<circle cx="1045" cy="948" r="7" stroke="#777" stroke-width="1.300"/><path d="M1041 948h8M1045 944v8" stroke="#777" stroke-width="1.500"/>
<path d="M1223 944v8l-4-4z" fill="#c4c4c4"/><path d="M1248 944v8l4-4z" fill="#217346"/>
<!-- view -->
<path d="M1008.500 966.500h13v13h-13zM1012.500 966v14M1016.500 966v14M1008 970.500h14M1008 975.500h14" stroke="#666"/>
<path d="M1047.500 966.500h12v13h-12z M1050 970h7M1050 973h7M1050 976h7" stroke="#666"/>
<path d="M1085.500 966.500h12v12h-12zM1091.500 966v6h6" stroke="#666"/>
<path d="M1125 973h100M1176 969v7" stroke="#888"/><path d="M1115 973h5M1232 973h7M1235.500 969v8" stroke="#555" stroke-width="1.600"/><rect x="1158" y="967" width="4" height="12" fill="#666"/>
<!-- taskbar -->
<path d="M16 997l7-1v7h-7zM24 995l8-1v9h-8zM16 1004h7v7l-7-1zM24 1004h8v9l-8-1z" fill="#fff"/>
<circle cx="70" cy="1003" r="5.500" stroke="#222" stroke-width="1.300"/><path d="M66 1007l-6 6" stroke="#222" stroke-width="1.300"/>
<!-- landscape -->
<path d="M257 1024c3-10 8-18 18-22l15 2 46 8v12z" fill="#7cc4ee"/>
<path d="M276 1003c8-5 30-7 60-5v26h-42c-8-6 4-10-8-13z" fill="#ded3b2"/>
<path d="M278 1004c10-6 32-8 58-6v4c-14-2-24 2-34 0-8-1-14 4-24 2z" fill="#8f8c46"/>
<path d="M284 1008c8 2 10 5 20 3 8-2 20-2 24 2-6 4-12 6-22 5-8-1-10-3-16-3z" fill="#24bccb"/>
<path d="M273 993a4 4 0 0 1 8-3 5 5 0 0 1 9 4h-17z" fill="#b4cfe2"/><path d="M261 1000a3 3 0 0 1 5-2 3 3 0 0 1 6 2h-11z" fill="#b4cfe2"/>
<path d="M353 995h14M353 1014h14M354.500 999.500h11v10h-11z" stroke="#fff" stroke-width="1.200"/><rect x="366" y="1000" width="2.500" height="2.500" fill="#fff"/><path d="M367 1005v6" stroke="#fff"/>
<circle cx="411" cy="1004" r="12" fill="#1f6fc4"/><path d="M401 998c4-7 18-8 21 2 1 6-6 9-11 6 4 0 5-3 2-5-4-2-9-3-12-3z" fill="#4ecb71"/>
<path d="M449 995h8l2 2h11v18h-21z" fill="#f2c34d"/><path d="M449 1000h21v15h-21z" fill="#fcd874"/><path d="M454 1015v-6h10v6h-3v-3h-4v3z" fill="#2b7ec4"/>
<rect x="497" y="997" width="24" height="20" rx="3" fill="#f4f4f4"/><path d="M504 997c0-6 10-6 10 0" stroke="#27a7d8" stroke-width="1.500"/><rect x="504" y="1002" width="4.500" height="4.500" fill="#e74b3c"/><rect x="510" y="1002" width="4.500" height="4.500" fill="#7cb342"/><rect x="504" y="1008" width="4.500" height="4.500" fill="#29a3e8"/><rect x="510" y="1008" width="4.500" height="4.500" fill="#fbc02d"/>
<rect x="552" y="993" width="18" height="20" fill="#2a6cc0"/><rect x="546" y="998" width="14" height="14" rx="1" fill="#0f63b8"/><circle cx="553" cy="1005" r="4" stroke="#fff" stroke-width="1.800"/><path d="M560 1003l10 6v5h-10z" fill="#62b6e8"/>
<circle cx="607" cy="1005" r="12" fill="#e53b30"/><path d="M596 1011a12 12 0 0 0 15 6l5-11h-9z" fill="#3ea450"/><path d="M607 1000h11a12 12 0 0 1-7 17z" fill="#f8c924"/><circle cx="607" cy="1005" r="5" fill="#fff"/><circle cx="607" cy="1005" r="3.800" fill="#4a8ff0"/>
<circle cx="656" cy="1005" r="10.500" stroke="#3bdc65" stroke-width="2.800" fill="#17272e"/><path d="M647 1016l2-6 4 4z" fill="#3bdc65"/><path d="M651 1000c0 5 4 9 9 9l1-3-3-1-1 1c-1 0-3-2-3-3l1-1-1-3z" fill="#3bdc65"/>
<rect x="699" y="994" width="16" height="20" fill="#fff" opacity=".85"/><path d="M707 994v20M699 1000h16M699 1007h16" stroke="#1b7a45"/><rect x="694" y="998" width="13" height="14" fill="#1a7a45"/>
<text x="697" y="1009" font-family="Liberation Sans" font-size="10" font-weight="bold" fill="#fff">X</text>
<rect x="747" y="994" width="17" height="20" fill="#fff"/><path d="M752 998h10M752 1002h10M752 1006h10M752 1010h10" stroke="#2b5fb0"/><rect x="743" y="997" width="13" height="14" fill="#1c50a5"/>
<text x="745" y="1008" font-family="Liberation Sans" font-size="9" font-weight="bold" fill="#fff">W</text>
<rect x="791" y="992" width="24" height="24" rx="4" fill="#ee1c25"/><path d="M795 999l4 11 4-8 4 8 4-11" stroke="#fff" stroke-width="2.400"/>
<rect x="840" y="993" width="24" height="23" rx="3" fill="#e8eef2"/><path d="M856 994c5 8 5 14 2 21h5v-21z" fill="#4aa4d8"/><rect x="843" y="996" width="14" height="17" rx="2" fill="#1d2e3c"/><path d="M847 1000l7 4.500-7 4.500z" fill="#4aa4d8"/>
<ellipse cx="899" cy="1006" rx="10" ry="9" fill="#b6d8ee"/><circle cx="895" cy="1003" r="1.800" fill="#e74b3c"/><circle cx="900" cy="1001" r="1.800" fill="#f8c924"/><circle cx="894" cy="1009" r="1.800" fill="#3ea450"/><path d="M903 1012l8-20 2 1-6 20z" fill="#e9a84a"/>
<circle cx="994" cy="1006" r="10" fill="#e8922b"/><circle cx="1000" cy="1000" r="6" fill="#c9302c"/><text x="998" y="1003" font-family="Liberation Sans" font-size="8" fill="#fff">1</text>
<path d="M1068 1009l5-5 5 5" stroke="#fff" stroke-width="1.500"/>
<path d="M1090.500 997.500h15v11h-15zM1094 1012h12M1100 1008v4M1090 1003h6" stroke="#fff"/>
<path d="M1114 1001h3l5-4v15l-5-4h-3zM1125 1001c2 2 2 5 0 7M1128 999c3 3 3 8 0 11" stroke="#fff"/>
<path d="M1240.500 994.500h16v11h-9l-4 4v-4h-3zM1243 998h11M1243 1001h11" stroke="#fff" fill="#fff"/><path d="M1243 998h11M1243 1001h11" stroke="#17272e"/>
<circle cx="1256" cy="1012" r="8" stroke="#888"/>
</svg>
</body></html>
